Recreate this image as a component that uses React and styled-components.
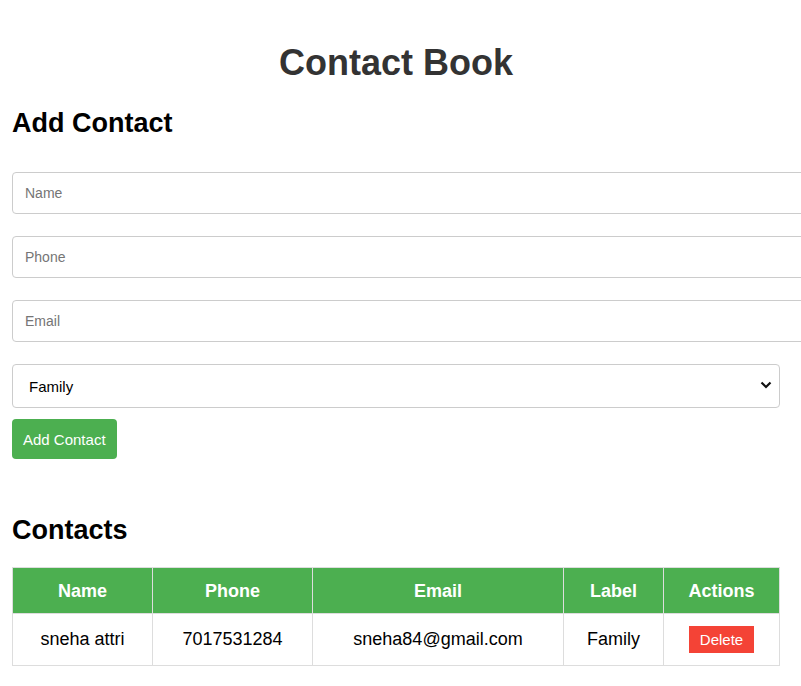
import React, { useState } from 'react';
import styled, { createGlobalStyle } from 'styled-components';

const GlobalStyle = createGlobalStyle`
  html, body {
    margin: 0;
    padding: 0;
    overflow-x: hidden;
    background: #fff;
    font-family: "Liberation Sans", Arial, sans-serif;
  }
`;

const Page = styled.div`
  width: 768px;
  padding: 42px 12px 20px;
`;

const Title = styled.h1`
  margin: 0;
  font-size: 36px;
  font-weight: bold;
  text-align: center;
  color: #333;
`;

const SectionTitle = styled.h2`
  margin: ${(props) => props.top}px 0 0;
  font-size: 27px;
  font-weight: bold;
  color: #000;
`;

const Form = styled.form`
  margin-top: 33px;
  display: flex;
  flex-direction: column;
  align-items: flex-start;
`;

const Input = styled.input`
  box-sizing: content-box;
  width: 100%;
  margin: 0 0 22px;
  padding: 12px;
  font-family: "Liberation Sans", Arial, sans-serif;
  font-size: 14px;
  border: 1px solid #ccc;
  border-radius: 4px;
  outline: none;
  &::placeholder {
    color: #757575;
  }
`;

const SelectWrap = styled.div`
  position: relative;
  width: 100%;
  margin: 0 0 11px;
`;

const Select = styled.select`
  display: block;
  box-sizing: border-box;
  width: 100%;
  height: 44px;
  padding: 0 16px;
  font-family: "Liberation Sans", Arial, sans-serif;
  font-size: 15px;
  color: #000;
  background: #fff;
  border: 1px solid #ccc;
  border-radius: 4px;
  outline: none;
  appearance: none;
  -webkit-appearance: none;
`;

const Chevron = styled.svg`
  position: absolute;
  right: 8px;
  top: 17px;
  width: 12px;
  height: 8px;
  pointer-events: none;
`;

const Button = styled.button`
  height: 40px;
  padding: 0 11px;
  font-family: "Liberation Sans", Arial, sans-serif;
  font-size: 15px;
  color: #fff;
  background: #4caf50;
  border: none;
  border-radius: 4px;
  cursor: pointer;
`;

const Table = styled.table`
  margin-top: 21px;
  width: 767px;
  border-collapse: collapse;
  table-layout: fixed;
  font-size: 18px;
`;

const HeadCell = styled.th`
  box-sizing: border-box;
  width: ${(props) => props.w}px;
  padding: 13px 12px 11px;
  background: #4caf50;
  color: #fff;
  font-weight: bold;
  text-align: center;
  border: 1px solid #ddd;
`;

const Cell = styled.td`
  padding: 12px;
  text-align: center;
  color: #000;
  border: 1px solid #ddd;
`;

const DeleteButton = styled.button`
  height: 27px;
  padding: 0 11px;
  font-family: "Liberation Sans", Arial, sans-serif;
  font-size: 15px;
  color: #fff;
  background: #f44336;
  border: none;
  border-radius: 0;
  vertical-align: middle;
  cursor: pointer;
`;

const columns = [
  { name: 'Name', w: 140 },
  { name: 'Phone', w: 160 },
  { name: 'Email', w: 251 },
  { name: 'Label', w: 100 },
  { name: 'Actions', w: 116 },
];

const App = () => {
  const [contacts, setContacts] = useState([
    { name: 'sneha attri', phone: '7017531284', email: 'sneha84@gmail.com', label: 'Family' },
  ]);
  const [form, setForm] = useState({ name: '', phone: '', email: '', label: 'Family' });

  const update = (key) => (e) => setForm({ ...form, [key]: e.target.value });

  const addContact = (e) => {
    e.preventDefault();
    if (!form.name) return;
    setContacts([...contacts, form]);
    setForm({ name: '', phone: '', email: '', label: 'Family' });
  };

  return (
    <>
      <GlobalStyle />
      <Page>
        <Title>Contact Book</Title>
        <SectionTitle top={24}>Add Contact</SectionTitle>
        <Form onSubmit={addContact}>
          <Input placeholder="Name" value={form.name} onChange={update('name')} />
          <Input placeholder="Phone" value={form.phone} onChange={update('phone')} />
          <Input placeholder="Email" value={form.email} onChange={update('email')} />
          <SelectWrap>
            <Select value={form.label} onChange={update('label')}>
              <option>Family</option>
              <option>Friends</option>
              <option>Work</option>
            </Select>
            <Chevron viewBox="0 0 12 8">
              <path d="M1.5 1.5 L6 6 L10.5 1.5" fill="none" stroke="#111" strokeWidth="2.2" />
            </Chevron>
          </SelectWrap>
          <Button type="submit">Add Contact</Button>
        </Form>
        <SectionTitle top={56}>Contacts</SectionTitle>
        <Table>
          <thead>
            <tr>
              {columns.map((c) => (
                <HeadCell key={c.name} w={c.w}>{c.name}</HeadCell>
              ))}
            </tr>
          </thead>
          <tbody>
            {contacts.map((c, i) => (
              <tr key={i}>
                <Cell>{c.name}</Cell>
                <Cell>{c.phone}</Cell>
                <Cell>{c.email}</Cell>
                <Cell>{c.label}</Cell>
                <Cell>
                  <DeleteButton onClick={() => setContacts(contacts.filter((_, j) => j !== i))}>
                    Delete
                  </DeleteButton>
                </Cell>
              </tr>
            ))}
          </tbody>
        </Table>
      </Page>
    </>
  );
};

export default App;
